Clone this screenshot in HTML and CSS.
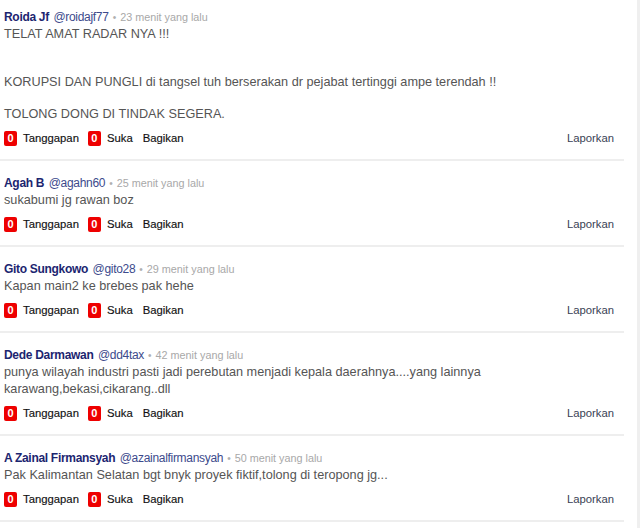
FILE: index.html
```html
<!DOCTYPE html>
<html lang="id">
<head>
<meta charset="utf-8">
<title>Komentar</title>
<link rel="stylesheet" href="styles.css">
</head>
<body>
<div class="page">
  <div class="list">
    <div class="comment first">
      <div class="meta"><span class="name">Roida Jf</span> <span class="handle">@roidajf77</span><span class="dot">•</span><span class="time">23 menit yang lalu</span></div>
      <div class="body">
        <p>TELAT AMAT RADAR NYA !!!</p>
        <p class="gap2">KORUPSI DAN PUNGLI di tangsel tuh berserakan dr pejabat tertinggi ampe terendah !!</p>
        <p class="gap1">TOLONG DONG DI TINDAK SEGERA.</p>
      </div>
      <div class="actions">
        <span class="badge">0</span><span class="act">Tanggapan</span>
        <span class="badge">0</span><span class="act">Suka</span>
        <span class="act share">Bagikan</span>
        <span class="report">Laporkan</span>
      </div>
    </div>
    <div class="comment">
      <div class="meta"><span class="name">Agah B</span> <span class="handle">@agahn60</span><span class="dot">•</span><span class="time">25 menit yang lalu</span></div>
      <div class="body"><p>sukabumi jg rawan boz</p></div>
      <div class="actions">
        <span class="badge">0</span><span class="act">Tanggapan</span>
        <span class="badge">0</span><span class="act">Suka</span>
        <span class="act share">Bagikan</span>
        <span class="report">Laporkan</span>
      </div>
    </div>
    <div class="comment">
      <div class="meta"><span class="name">Gito Sungkowo</span> <span class="handle">@gito28</span><span class="dot">•</span><span class="time">29 menit yang lalu</span></div>
      <div class="body"><p>Kapan main2 ke brebes pak hehe</p></div>
      <div class="actions">
        <span class="badge">0</span><span class="act">Tanggapan</span>
        <span class="badge">0</span><span class="act">Suka</span>
        <span class="act share">Bagikan</span>
        <span class="report">Laporkan</span>
      </div>
    </div>
    <div class="comment">
      <div class="meta"><span class="name">Dede Darmawan</span> <span class="handle">@dd4tax</span><span class="dot">•</span><span class="time">42 menit yang lalu</span></div>
      <div class="body"><p>punya wilayah industri pasti jadi perebutan menjadi kepala daerahnya....yang lainnya<br>karawang,bekasi,cikarang..dll</p></div>
      <div class="actions">
        <span class="badge">0</span><span class="act">Tanggapan</span>
        <span class="badge">0</span><span class="act">Suka</span>
        <span class="act share">Bagikan</span>
        <span class="report">Laporkan</span>
      </div>
    </div>
    <div class="comment">
      <div class="meta"><span class="name">A Zainal Firmansyah</span> <span class="handle">@azainalfirmansyah</span><span class="dot">•</span><span class="time">50 menit yang lalu</span></div>
      <div class="body"><p>Pak Kalimantan Selatan bgt bnyk proyek fiktif,tolong di teropong jg...</p></div>
      <div class="actions">
        <span class="badge">0</span><span class="act">Tanggapan</span>
        <span class="badge">0</span><span class="act">Suka</span>
        <span class="act share">Bagikan</span>
        <span class="report">Laporkan</span>
      </div>
    </div>
  </div>
  <div class="rail"></div>
</div>
</body>
</html>
```
FILE: styles.css
```css
html, body {
  margin: 0;
  padding: 0;
  background: #ffffff;
}
body {
  font-family: "Liberation Sans", Arial, sans-serif;
  height: 528px;
  overflow: hidden;
}
.page {
  display: flex;
  height: 528px;
}
.list {
  width: 624px;
  flex: none;
}
.rail {
  margin-left: auto;
  width: 3px;
  background: #efefef;
}
.comment {
  padding: 13px 10px 13px 4px;
  border-bottom: 2px solid #eeeeee;
}
.comment.first {
  padding-top: 8px;
}
.meta {
  line-height: 16px;
  height: 16px;
  white-space: nowrap;
}
.name {
  font-size: 12px;
  font-weight: bold;
  letter-spacing: -0.3px;
  color: #1c2570;
}
.handle {
  font-size: 12px;
  letter-spacing: -0.3px;
  color: #3c4a8c;
}
.dot {
  font-size: 10px;
  color: #b0b0b0;
  margin: 0 4px 0 4px;
}
.time {
  font-size: 10.8px;
  color: #a8a8a8;
}
.body {
  margin-top: 2px;
  font-size: 12.7px;
  line-height: 17px;
  color: #555555;
}
.body p {
  margin: 0;
}
.body p.gap2 {
  margin-top: 31px;
}
.body p.gap1 {
  margin-top: 15px;
}
.actions {
  margin-top: 7px;
  display: flex;
  align-items: center;
  height: 16px;
  font-size: 11.3px;
}
.badge {
  display: inline-flex;
  align-items: center;
  justify-content: center;
  width: 13px;
  height: 15px;
  background: #ee0000;
  color: #ffffff;
  font-weight: bold;
  font-size: 11px;
  border-radius: 2px;
  margin-right: 6px;
}
.act {
  color: #111111;
  margin-right: 9px;
  -webkit-text-stroke: 0.15px #111111;
}
.share {
  margin-left: 1px;
  margin-right: 0;
}
.report {
  margin-left: auto;
  color: #3a3f55;
}
```
